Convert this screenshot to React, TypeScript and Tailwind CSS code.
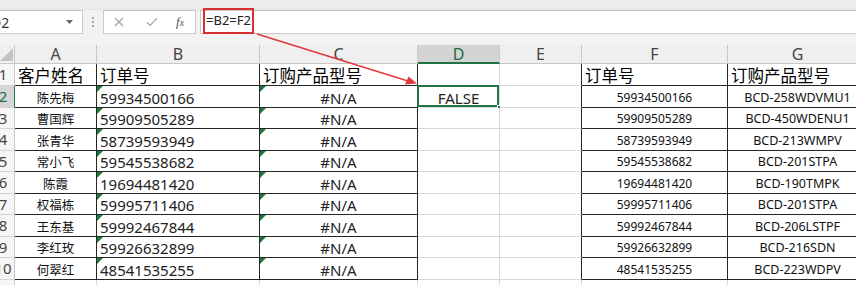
import React from 'react';

const cols = [15, 82, 163, 158, 82, 82, 146, 140];
const letters = ['', 'A', 'B', 'C', 'D', 'E', 'F', 'G'];

const names = ['陈先梅', '曹国辉', '张青华', '常小飞', '陈霞', '权福栋', '王东基', '李红玫', '何翠红'];
const orders = [
  '59934500166',
  '59909505289',
  '58739593949',
  '59545538682',
  '19694481420',
  '59995711406',
  '59992467844',
  '59926632899',
  '48541535255'
];
const models = [
  'BCD-258WDVMU1',
  'BCD-450WDENU1',
  'BCD-213WMPV',
  'BCD-201STPA',
  'BCD-190TMPK',
  'BCD-201STPA',
  'BCD-206LSTPF',
  'BCD-216SDN',
  'BCD-223WDPV'
];

// rows 1..10, columns A-C and F-G have the black table borders
function inTable(r: number, c: number) {
  return r >= 1 && r <= 10 && ((c >= 1 && c <= 3) || c === 6 || c === 7);
}

function GreenTick() {
  return (
    <span className="absolute left-0 top-0 w-0 h-0 border-t-[6px] border-r-[6px] border-t-[#1e7a3c] border-r-transparent" />
  );
}

function cellContent(r: number, c: number) {
  if (r === 1) {
    const head: Record<number, string> = { 1: '客户姓名', 2: '订单号', 3: '订购产品型号', 6: '订单号', 7: '订购产品型号' };
    if (!head[c]) return null;
    return (
      <span className="pl-[3px] text-[16.5px] leading-[20px] text-black font-['Noto_Sans_CJK_SC',sans-serif]">
        {head[c]}
      </span>
    );
  }
  if (r >= 2 && r <= 10) {
    const i = r - 2;
    if (c === 1)
      return (
        <span className="w-full text-center text-[12.5px] leading-[19px] text-[#111] font-['Noto_Sans_CJK_SC',sans-serif]">
          {names[i]}
        </span>
      );
    if (c === 2)
      return (
        <>
          <GreenTick />
          <span className="pl-[3px] text-[15px] leading-[18px] text-[#222] font-['Noto_Sans',sans-serif]">{orders[i]}</span>
        </>
      );
    if (c === 3)
      return (
        <>
          <GreenTick />
          <span className="w-full text-center text-[15px] leading-[18px] text-[#222] font-['Noto_Sans',sans-serif]">#N/A</span>
        </>
      );
    if (c === 4 && r === 2)
      return (
        <>
          <span className="w-full text-center text-[15px] leading-[18px] text-[#222] font-['Noto_Sans',sans-serif]">FALSE</span>
          <span className="absolute -left-[1px] -top-[1px] right-0 bottom-0 border-2 border-[#217346]" />
          <span className="absolute -right-[3px] -bottom-[3px] w-[5px] h-[5px] bg-[#217346] border border-white" />
        </>
      );
    if (c === 6)
      return (
        <span className="w-full text-center text-[12px] leading-[19px] text-[#111] font-['Noto_Sans',sans-serif]">{orders[i]}</span>
      );
    if (c === 7)
      return (
        <span className="w-full text-center text-[12.5px] leading-[19px] text-[#111] font-['Noto_Sans',sans-serif]">{models[i]}</span>
      );
  }
  return null;
}

function rowHeight(r: number) {
  if (r === 1) return 'h-[22px]';
  if (r === 11) return 'h-[10px]';
  return 'h-[21.5px]';
}

function Row({ r }: { r: number }) {
  return (
    <div className={`flex ${rowHeight(r)}`}>
      {cols.map((w, c) => {
        if (c === 0) {
          const active = r === 2;
          return (
            <div
              key={c}
              style={{ width: w }}
              className={`shrink-0 relative overflow-hidden border-b border-b-[#d4d4d4] border-r ${
                active ? 'bg-[#d6d6d6] border-r-[#217346] text-[#1d6b3c]' : 'bg-[#f6f6f6] border-r-[#c8c8c8] text-[#444]'
              }`}
            >
              {r <= 10 && (
                <span className="absolute -left-[12px] w-[30px] top-0 bottom-0 flex items-center justify-center text-[15px] font-['Noto_Sans',sans-serif]">
                  {r}
                </span>
              )}
            </div>
          );
        }
        const rDark = inTable(r, c) || inTable(r, c + 1);
        const bDark = inTable(r, c) || inTable(r + 1, c);
        return (
          <div
            key={c}
            style={{ width: w }}
            className={`shrink-0 relative flex items-end bg-white border-r border-b ${
              rDark ? 'border-r-[#262626]' : 'border-r-[#d9d9d9]'
            } ${bDark ? 'border-b-[#262626]' : 'border-b-[#d9d9d9]'}`}
          >
            {cellContent(r, c)}
          </div>
        );
      })}
    </div>
  );
}

function HeaderRow() {
  return (
    <div className="flex h-[19px]">
      {cols.map((w, c) => {
        if (c === 0)
          return (
            <div key={c} style={{ width: w }} className="shrink-0 relative bg-[#efefef] border-r border-b border-[#c8c8c8]">
              <svg className="absolute right-[1px] bottom-[2px]" width="13" height="13" viewBox="0 0 13 13">
                <polygon points="13,0 13,13 0,13" fill="#c3c3c3" />
              </svg>
            </div>
          );
        const active = c === 4;
        return (
          <div
            key={c}
            style={{ width: w }}
            className={`shrink-0 flex items-center justify-center border-r border-r-[#c8c8c8] text-[16px] leading-none font-['Noto_Sans',sans-serif] ${
              active
                ? 'bg-[#d3d3d3] border-b-2 border-b-[#217346] text-[#1d6b3c]'
                : 'bg-[#efefef] border-b border-b-[#c8c8c8] text-[#444]'
            }`}
          >
            {letters[c]}
          </div>
        );
      })}
    </div>
  );
}

function FormulaBar() {
  return (
    <div className="flex h-[24px] items-stretch">
      <div className="w-[83px] bg-white border border-[#c9c9c9] border-l-0 flex items-center justify-between pr-[9px] overflow-hidden">
        <span className="-ml-[9px] text-[14px] text-[#333] font-['Noto_Sans',sans-serif]">D2</span>
        <svg width="7" height="4" viewBox="0 0 7 4">
          <polygon points="0,0 7,0 3.5,4" fill="#666" />
        </svg>
      </div>
      <div className="w-[20px] flex flex-col items-center justify-center gap-[2px]">
        <span className="w-[2px] h-[2px] bg-[#a8a8a8]" />
        <span className="w-[2px] h-[2px] bg-[#a8a8a8]" />
        <span className="w-[2px] h-[2px] bg-[#a8a8a8]" />
      </div>
      <div className="w-[93px] bg-white border border-[#c9c9c9] flex items-center">
        <svg className="ml-[10px]" width="10" height="10" viewBox="0 0 10 10">
          <path d="M1 1 L9 9 M9 1 L1 9" stroke="#a3a3a3" strokeWidth="1.2" />
        </svg>
        <svg className="ml-[22px]" width="12" height="10" viewBox="0 0 12 10">
          <path d="M1 5.5 L4.2 8.5 L11 1.2" stroke="#a3a3a3" strokeWidth="1.2" fill="none" />
        </svg>
        <span className="ml-[18px] text-[13px] italic text-[#555] font-['Liberation_Serif',serif]">
          f<span className="text-[10px]">x</span>
        </span>
      </div>
      <div className="flex-1 ml-[4px] bg-white border border-[#c9c9c9] border-r-0 flex items-center">
        <span className="ml-[2px] -mt-[2px] h-[26px] w-[51px] border-[2.5px] border-[#d8302e] flex items-center justify-center text-[13px] text-[#222] font-['Noto_Sans',sans-serif]">
          =B2=F2
        </span>
      </div>
    </div>
  );
}

export default function App() {
  return (
    <div className="relative w-[856px] h-[285px] overflow-hidden bg-[#f2f2f2]">
      <div className="h-[10px] border-b border-[#e2e2e2] bg-[#ececec]" />
      <FormulaBar />
      <div className="h-[11px]" />
      <HeaderRow />
      {[1, 2, 3, 4, 5, 6, 7, 8, 9, 10, 11].map((r) => (
        <Row key={r} r={r} />
      ))}
      <svg className="absolute left-0 top-0 pointer-events-none" width="856" height="285">
        <line x1="257" y1="34" x2="408" y2="81" stroke="#e0393a" strokeWidth="1.6" />
        <polygon points="417,83.5 405,84.5 408.5,76.5" fill="#e0393a" />
      </svg>
    </div>
  );
}
